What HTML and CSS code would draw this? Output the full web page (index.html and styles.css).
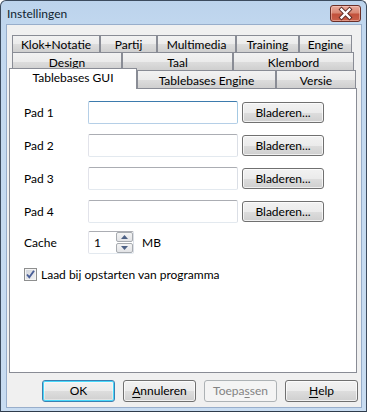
FILE: index.html
```html
<!DOCTYPE html>
<html>
<head>
<meta charset="utf-8">
<link rel="stylesheet" href="styles.css">
</head>
<body>
<div class="window">
  <div class="titlebar">
    <span class="title">Instellingen</span>
    <div class="close">
      <svg width="29" height="15" viewBox="0 0 29 15">
        <path d="M10.5 3.5 L18.5 11.5 M18.5 3.5 L10.5 11.5" stroke="#5a2a25" stroke-width="4.2" stroke-linecap="square"/>
        <path d="M10.5 3.5 L18.5 11.5 M18.5 3.5 L10.5 11.5" stroke="#ffffff" stroke-width="2.4" stroke-linecap="square"/>
      </svg>
    </div>
  </div>
  <div class="client">
    <div class="tabctl">
      <div class="tabrow r1">
        <div class="tab w88">Klok+Notatie</div>
        <div class="tab w57">Partij</div>
        <div class="tab w79">Multimedia</div>
        <div class="tab w63">Training</div>
        <div class="tab w53">Engine</div>
      </div>
      <div class="tabrow r2">
        <div class="tab w110">Design</div>
        <div class="tab w111">Taal</div>
        <div class="tab w121">Klembord</div>
      </div>
      <div class="tabrow r3">
        <div class="tab sel w128">Tablebases GUI</div>
        <div class="tab w139">Tablebases Engine</div>
        <div class="tab w80">Versie</div>
      </div>
      <div class="panel">
        <div class="row">
          <span class="label">Pad 1</span>
          <div class="field hot"></div>
          <div class="btn">Bladeren...</div>
        </div>
        <div class="row">
          <span class="label">Pad 2</span>
          <div class="field"></div>
          <div class="btn">Bladeren...</div>
        </div>
        <div class="row">
          <span class="label">Pad 3</span>
          <div class="field"></div>
          <div class="btn">Bladeren...</div>
        </div>
        <div class="row last">
          <span class="label">Pad 4</span>
          <div class="field"></div>
          <div class="btn">Bladeren...</div>
        </div>
        <div class="row cache">
          <span class="label">Cache</span>
          <div class="spin">
            <span class="spinval">1</span>
            <div class="spinbtns">
              <div class="sb up"><svg width="7" height="4" viewBox="0 0 7 4"><path d="M0 4 L3.5 0 L7 4 Z" fill="#4d6185"/></svg></div>
              <div class="sb down"><svg width="7" height="4" viewBox="0 0 7 4"><path d="M0 0 L3.5 4 L7 0 Z" fill="#4d6185"/></svg></div>
            </div>
          </div>
          <span class="unit">MB</span>
        </div>
        <div class="checkrow">
          <div class="checkbox">
            <svg width="11" height="11" viewBox="0 0 11 11"><path d="M2 5.5 L4.3 8.3 L9 1.8" fill="none" stroke="#4a5f97" stroke-width="1.9"/></svg>
          </div>
          <span>Laad bij opstarten van programma</span>
        </div>
      </div>
    </div>
    <div class="buttons">
      <div class="btn big def">OK</div>
      <div class="btn big"><u>A</u>nnuleren</div>
      <div class="btn big dis">Toepa<u>s</u>sen</div>
      <div class="btn big"><u>H</u>elp</div>
    </div>
  </div>
</div>
</body>
</html>
```

FILE: styles.css
```css
* { box-sizing: border-box; }

body {
  margin: 0;
  background: #ffffff;
  font-family: "Segoe UI", Lato, "Noto Sans", sans-serif;
  font-size: 12px;
  color: #000000;
}

.window {
  width: 367px;
  height: 412px;
  border: 1px solid #3c4b5e;
  border-bottom-color: #2e3b4b;
  border-radius: 6px 6px 0 0;
  background: linear-gradient(#bcd3ec 0px, #c2d8ef 30px, #c8dcf1 100%);
  padding: 0 5px 4px 6px;
  display: flex;
  flex-direction: column;
  overflow: hidden;
}

.titlebar {
  height: 24px;
  display: flex;
  align-items: center;
  justify-content: space-between;
  flex-shrink: 0;
}

.title {
  font-size: 12px;
  color: #0f1e30;
  padding-top: 1px;
}

.close {
  width: 31px;
  height: 17px;
  margin-top: 1px;
  border: 1px solid #6b2f28;
  border-radius: 3px;
  background: linear-gradient(#e9a99c 0%, #d98874 45%, #c2513c 55%, #c9604a 100%);
  box-shadow: inset 0 0 0 1px rgba(255, 220, 210, 0.45);
  display: flex;
  align-items: center;
  justify-content: center;
}

.client {
  flex: 1;
  background: #f0f0f0;
  box-shadow: 0 0 0 1px #98aecb;
  display: flex;
  flex-direction: column;
}

.tabctl {
  margin: 10px 0 0 2px;
  width: 348px;
  display: flex;
  flex-direction: column;
}

.tabrow {
  display: flex;
}

.r1 { height: 17px; padding-left: 3px; }
.r2 { height: 18px; padding-left: 3px; }
.r3 { height: 18px; padding-left: 0; }

.tab {
  border: 1px solid #898c95;
  border-bottom: none;
  background: linear-gradient(#f2f2f2 0%, #ebebeb 50%, #dddddd 51%, #cfcfcf 100%);
  display: flex;
  align-items: center;
  justify-content: center;
  padding-top: 1px;
  white-space: nowrap;
}

.tab.sel {
  background: #ffffff;
  margin-top: -2px;
  margin-bottom: -1px;
  padding-top: 0;
  align-items: flex-start;
  padding-top: 1px;
  position: relative;
  z-index: 1;
}

.w88 { width: 88px; }
.w57 { width: 57px; }
.w79 { width: 79px; }
.w63 { width: 63px; }
.w53 { width: 53px; }
.w110 { width: 110px; }
.w111 { width: 111px; }
.w121 { width: 121px; }
.w128 { width: 128px; }
.w139 { width: 139px; }
.w80 { width: 80px; }

.panel {
  height: 285px;
  border: 1px solid #898c95;
  background: #ffffff;
  padding: 12px 0 0 14px;
  display: flex;
  flex-direction: column;
}

.row {
  display: flex;
  align-items: center;
  height: 23px;
  margin-bottom: 10px;
}

.row.last { margin-bottom: 8px; }

.label {
  width: 64px;
}

.field {
  width: 150px;
  height: 23px;
  background: #ffffff;
  border: 1px solid;
  border-color: #abadb3 #dbdfe6 #e3e9ef #e2e3ea;
  border-radius: 2px;
}

.field.hot {
  border-color: #3d7bad #a4c9e3 #b5cfe7 #b5cfe7;
}

.btn {
  margin-left: 4px;
  width: 82px;
  height: 21px;
  border: 1px solid #707070;
  border-radius: 3px;
  background: linear-gradient(#f2f2f2 0%, #ebebeb 50%, #dddddd 51%, #cfcfcf 100%);
  box-shadow: inset 0 0 0 1px rgba(255, 255, 255, 0.7);
  display: flex;
  align-items: center;
  justify-content: center;
  padding-bottom: 1px;
}

.cache { margin-bottom: 14px; }

.spin {
  width: 46px;
  height: 23px;
  border: 1px solid;
  border-color: #abadb3 #dbdfe6 #e3e9ef #e2e3ea;
  border-radius: 2px;
  background: #ffffff;
  display: flex;
  align-items: center;
  justify-content: space-between;
}

.spinval {
  padding-left: 5px;
  padding-bottom: 1px;
}

.spinbtns {
  width: 17px;
  height: 21px;
  display: flex;
  flex-direction: column;
  justify-content: space-between;
  margin-right: 0;
}

.sb {
  height: 10px;
  border: 1px solid #a7abb0;
  border-radius: 2px;
  background: linear-gradient(#f4f4f4, #e2e3e6);
  display: flex;
  align-items: center;
  justify-content: center;
}

.unit {
  margin-left: 8px;
}

.checkrow {
  display: flex;
  align-items: center;
  height: 13px;
}

.checkbox {
  width: 13px;
  height: 13px;
  border: 1px solid #8e8f8f;
  background: linear-gradient(135deg, #cfd3da, #f4f4f4);
  box-shadow: inset 0 0 0 1px #f4f4f4;
  display: flex;
  align-items: center;
  justify-content: center;
  margin-right: 4px;
}

.buttons {
  display: flex;
  margin-top: 7px;
  padding-left: 35px;
  gap: 8px;
}

.btn.big {
  margin-left: 0;
  width: 73px;
  height: 22px;
}

.btn.def {
  border-color: #3c7fb1;
  box-shadow: inset 0 0 0 1px #48d8fb, inset 0 0 0 2px rgba(255,255,255,0.4);
}

.btn.dis {
  border-color: #adb2b5;
  background: #f4f4f4;
  box-shadow: none;
  color: #838383;
}

u { text-decoration-thickness: 1px; text-underline-offset: 2px; }
```
